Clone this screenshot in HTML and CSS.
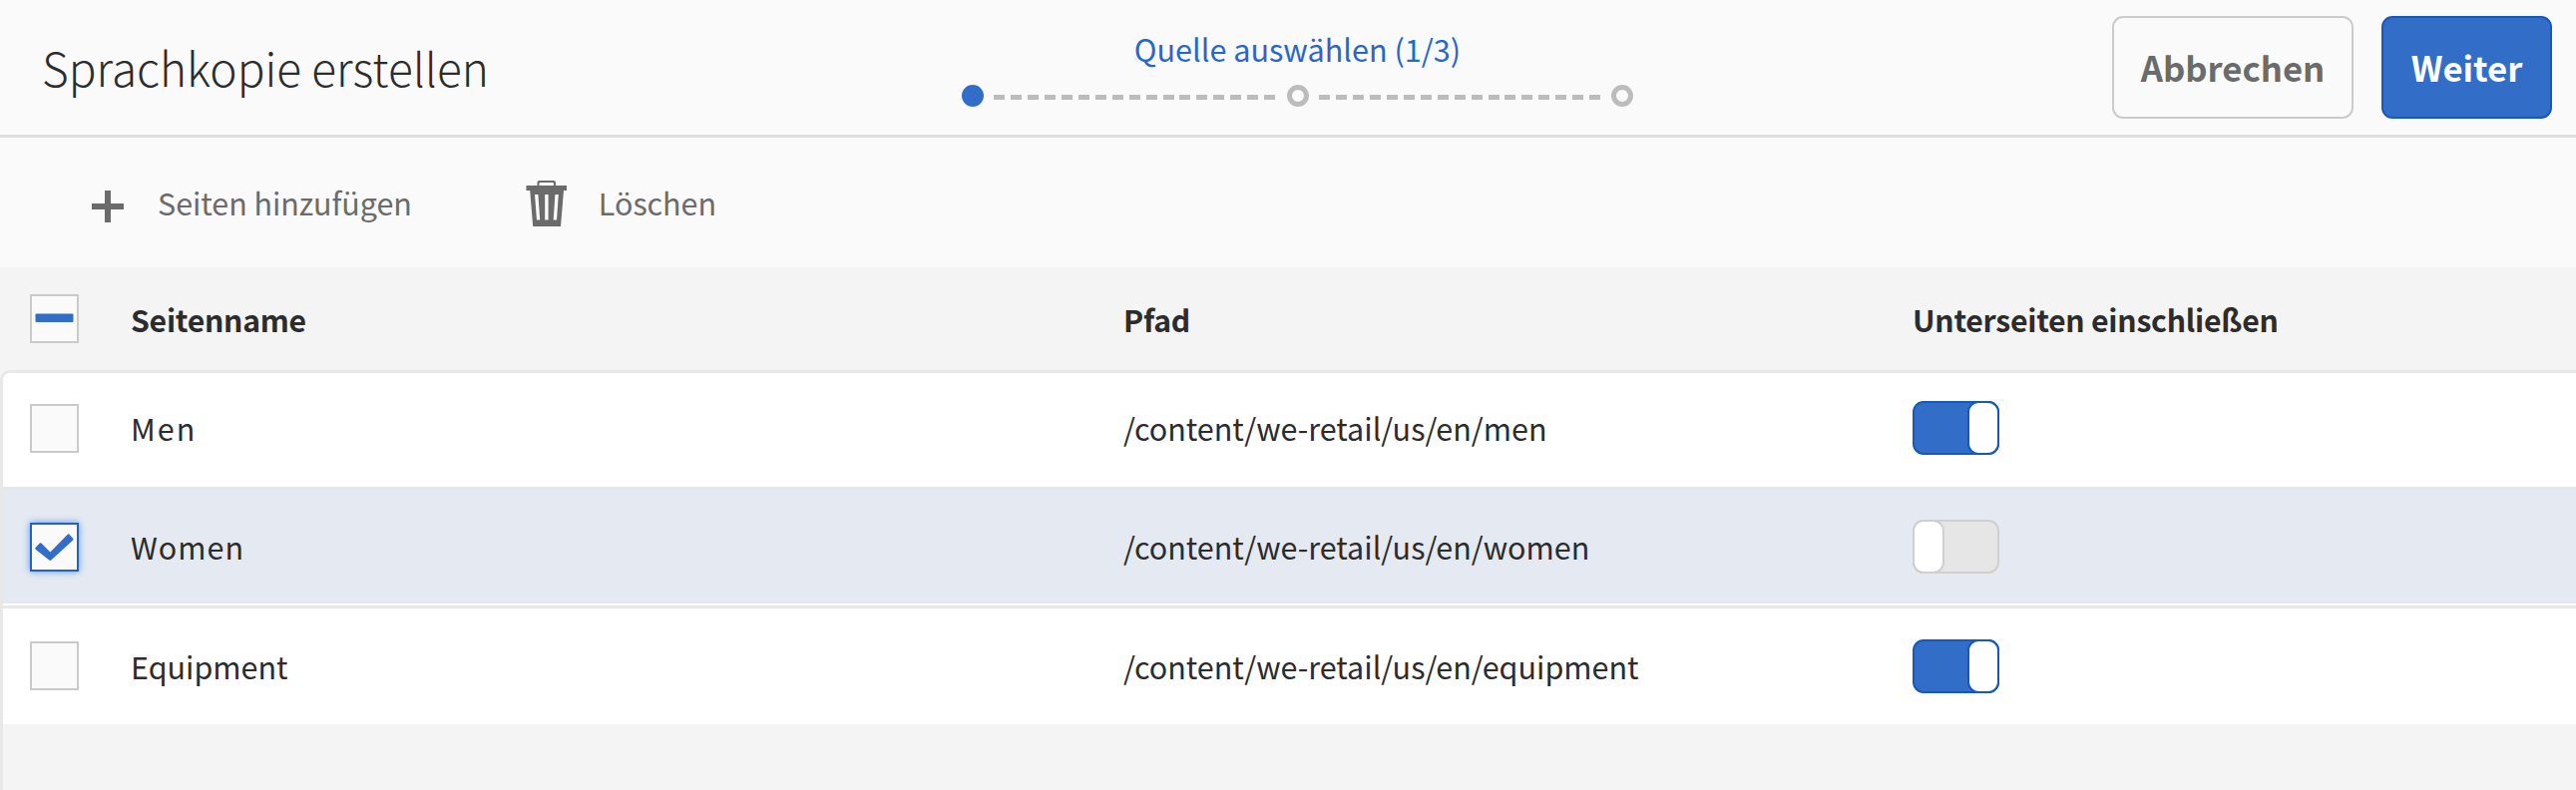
FILE: index.html
```
<!DOCTYPE html>
<html lang="de">
<head>
<meta charset="utf-8">
<title>Sprachkopie erstellen</title>
<link rel="stylesheet" href="styles.css">
</head>
<body>
<header class="header">
  <h1 class="title">Sprachkopie erstellen</h1>
  <div class="wizard">
    <div class="wizard-label">Quelle auswählen (1/3)</div>
    <div class="steps">
      <span class="dot dot-active"></span>
      <span class="dashes"></span>
      <span class="dot"></span>
      <span class="dashes"></span>
      <span class="dot"></span>
    </div>
  </div>
  <div class="actions">
    <button class="btn">Abbrechen</button>
    <button class="btn btn-primary">Weiter</button>
  </div>
</header>

<nav class="toolbar">
  <button class="tool">
    <svg class="icon-plus" width="34" height="34" viewBox="0 0 34 34"><path d="M14 1h6v13h13v6H20v13h-6V20H1v-6h13z"/></svg>
    <span>Seiten hinzufügen</span>
  </button>
  <button class="tool tool-delete">
    <svg class="icon-trash" width="42" height="48" viewBox="0 0 42 48">
      <path fill-rule="evenodd" d="M11.500 6V3q0-2 2-2h14.500q2 0 2 2v3H41v5H38L35 47H7.200L4.200 11H.5V6zM13.500 6H28V4q0-1-1-1H14.500q-1 0-1 1zM9 15h3.400l1.800 25.500H11zM19.200 15h3.400v25.500h-3.400zM29.400 15h3.400L31 40.500h-3.300z"/>
    </svg>
    <span>Löschen</span>
  </button>
</nav>

<main class="table">
  <div class="row row-head">
    <span class="check check-partial"><svg width="45" height="45" viewBox="0 0 45 45"><rect x="3.500" y="17.500" width="38" height="8.500" rx="1"/></svg></span>
    <span>Seitenname</span>
    <span>Pfad</span>
    <span>Unterseiten einschließen</span>
  </div>
  <div class="body">
    <div class="row">
      <span class="check"></span>
      <span class="name-men">Men</span>
      <span>/content/we-retail/us/en/men</span>
      <span class="switch switch-on"><i class="knob"></i></span>
    </div>
    <div class="row row-selected">
      <span class="check check-on"><svg width="45" height="45" viewBox="0 0 45 45"><path d="M3.500 23l4.300-4.500q.8-.6 1.600.1l9 8.800L35.800 9.700q.9-.7 1.700 0l3.700 4q.7.9 0 1.700L19.300 35.500q-1 .8-2 0L3.600 24.700q-.8-.9-.1-1.700z"/></svg></span>
      <span class="name-women">Women</span>
      <span>/content/we-retail/us/en/women</span>
      <span class="switch"><i class="knob"></i></span>
    </div>
    <div class="row row-last">
      <span class="check"></span>
      <span>Equipment</span>
      <span>/content/we-retail/us/en/equipment</span>
      <span class="switch switch-on"><i class="knob"></i></span>
    </div>
  </div>
</main>
</body>
</html>
```

FILE: styles.css
```
* { box-sizing: border-box; }

body {
  margin: 0;
  height: 792px;
  display: flex;
  flex-direction: column;
  background: #fafafa;
  color: #2c2c2c;
  font: 400 30.5px/44px "Noto Sans CJK SC", "Noto Sans", sans-serif;
  white-space: nowrap;
  overflow: hidden;
}

button {
  font: inherit;
  color: inherit;
  background: none;
  border: 0;
  padding: 0;
}

/* Header */
.header {
  height: 138px;
  flex: none;
  display: grid;
  grid-template-columns: 964px 673px 1fr;
  border-bottom: 3px solid #dedede;
}
.title {
  margin: 0;
  padding: 34px 0 0 42px;
  font-size: 46px;
  font-weight: 300;
  line-height: 66px;
}
.wizard { padding-top: 27px; }
.wizard-label {
  color: #2468cc;
  font-size: 30.600px;
  text-align: center;
}
.steps {
  display: flex;
  align-items: center;
  justify-content: space-between;
  margin-top: 14px;
}
.dot {
  width: 22px;
  height: 22px;
  border: 5px solid #bcbcbc;
  border-radius: 50%;
}
.dot-active {
  background: #326ec8;
  border-color: #326ec8;
}
.dashes {
  width: 283px;
  height: 5px;
  margin-top: 3px;
  background: repeating-linear-gradient(90deg, #bcbcbc 0 11px, transparent 11px 16.950px);
}
.actions {
  display: flex;
  justify-content: flex-end;
  gap: 28px;
  padding: 16px 24px 0 0;
}
.btn {
  width: 242px;
  height: 103px;
  padding-bottom: 1px;
  border: 2px solid #cbcbcb;
  border-radius: 11px;
  color: #6b6b6b;
  font-size: 34.700px;
  font-weight: 700;
}
.btn-primary {
  width: 171px;
  color: #fff;
  background: #326ec8;
  border-color: #1758bd;
}

/* Toolbar */
.toolbar {
  height: 130px;
  flex: none;
  display: flex;
  align-items: flex-start;
  padding: 43px 0 0 91px;
  color: #6b6b6b;
  fill: #6b6b6b;
}
.tool {
  display: flex;
  align-items: center;
  gap: 33px;
  height: 44px;
  letter-spacing: -0.050px;
}
.tool svg { flex: none; }
.tool-delete {
  margin-left: 114px;
  gap: 31px;
}
.icon-plus { margin-top: 7px; }
.icon-trash { margin-top: 2px; }

/* Table */
.table {
  flex: 1;
  display: flex;
  flex-direction: column;
  background: #f4f4f4;
}
.row {
  display: grid;
  grid-template-columns: 101px 995px 791px 1fr;
  align-items: center;
  height: 114px;
  padding-left: 30px;
  background: #fff;
}
.row-head {
  height: 103px;
  background: none;
  font-size: 30.200px;
  font-weight: 700;
  letter-spacing: -0.250px;
}
.row-head .check { margin-top: -1px; }
.name-men { letter-spacing: 2px; }
.name-women { letter-spacing: 1px; }
.body {
  flex: 1;
  border: solid #e8e8e8;
  border-width: 3px 0 0 3px;
  border-radius: 10px 0 0 0;
}
.body .row {
  padding-left: 27px;
}
.body .row:first-child {
  border-top-left-radius: 7px;
  padding-bottom: 4px;
}
.body .row-selected {
  height: 119px;
  border-top: 2px solid #e6e7e9;
  border-bottom: 2px solid #fff;
  padding-top: 1px;
  background: #e5eaf2;
  background-clip: padding-box;
}
.body .row-last {
  height: 119px;
  border-top: 3px solid #e8e8e8;
  padding-bottom: 1px;
}

.check {
  width: 49px;
  height: 49px;
  border: 2px solid #cacaca;
  background: #fafafa;
  fill: #326ec8;
}
.check svg { display: block; }
.check-on {
  border-color: #1f62c8;
  box-shadow: 0 0 7px #5f92dd;
}

.switch {
  display: flex;
  width: 87px;
  height: 54px;
  border: 2px solid #cfcfcf;
  border-radius: 11px;
  background: #e6e6e6;
}
.knob {
  width: 32px;
  height: 54px;
  margin: -2px;
  border: 2px solid #cfcfcf;
  border-radius: 11px;
  background: #fff;
}
.switch-on {
  justify-content: flex-end;
  background: #326ec8;
  border-color: #1558be;
}
.switch-on .knob { border-color: #1558be; }
```
